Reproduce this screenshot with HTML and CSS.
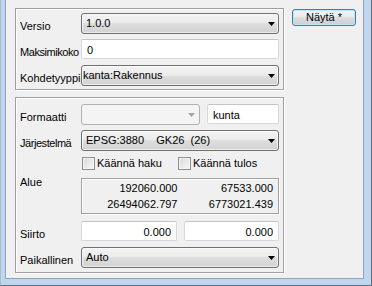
FILE: index.html
```html
<!DOCTYPE html>
<html lang="fi">
<head>
  <meta charset="UTF-8" />
  <title>Asetukset</title>
  <link rel="stylesheet" href="styles.css">
</head>
<body>
  <div class="window">
    <div class="client">
      <div class="panels">
        <div class="group group-top">
          <div class="row">
            <span class="label">Versio</span>
            <div class="combo">
              <span class="combo-text">1.0.0</span>
              <svg class="arrow" width="7" height="4" viewBox="0 0 7 4"><polygon points="0,0 7,0 3.5,4" /></svg>
            </div>
          </div>
          <div class="row row-tight">
            <span class="label label-narrow">Maksimikoko</span>
            <input class="textbox" type="text" value="0" />
          </div>
          <div class="row">
            <span class="label">Kohdetyyppi</span>
            <div class="combo combo-edit">
              <span class="combo-text">kanta:Rakennus</span>
              <svg class="arrow" width="7" height="4" viewBox="0 0 7 4"><polygon points="0,0 7,0 3.5,4" /></svg>
            </div>
          </div>
        </div>

        <div class="group group-bottom">
          <div class="row">
            <span class="label">Formaatti</span>
            <div class="field-pair">
              <div class="combo combo-disabled">
                <svg class="arrow" width="7" height="4" viewBox="0 0 7 4"><polygon points="0,0 7,0 3.5,4" /></svg>
              </div>
              <input class="textbox" type="text" value="kunta" />
            </div>
          </div>
          <div class="row row-tight">
            <span class="label label-narrow">Järjestelmä</span>
            <div class="combo">
              <span class="combo-text">EPSG:3880    GK26  (26)</span>
              <svg class="arrow" width="7" height="4" viewBox="0 0 7 4"><polygon points="0,0 7,0 3.5,4" /></svg>
            </div>
          </div>
          <div class="row row-checks">
            <span class="label"></span>
            <div class="checks">
              <label class="check"><span class="box"></span>Käännä haku</label>
              <label class="check"><span class="box"></span>Käännä tulos</label>
            </div>
          </div>
          <div class="row row-alue">
            <span class="label label-top">Alue</span>
            <div class="extent">
              <span>192060.000</span>
              <span>67533.000</span>
              <span>26494062.797</span>
              <span>6773021.439</span>
            </div>
          </div>
          <div class="row row-siirto">
            <span class="label">Siirto</span>
            <div class="field-pair">
              <input class="textbox num first" type="text" value="0.000" />
              <input class="textbox num" type="text" value="0.000" />
            </div>
          </div>
          <div class="row">
            <span class="label">Paikallinen</span>
            <div class="combo">
              <span class="combo-text">Auto</span>
              <svg class="arrow" width="7" height="4" viewBox="0 0 7 4"><polygon points="0,0 7,0 3.5,4" /></svg>
            </div>
          </div>
        </div>
      </div>

      <button class="btn-default">Näytä *</button>
    </div>
  </div>
</body>
</html>
```

FILE: styles.css
```css
html, body {
  margin: 0;
  padding: 0;
}
body {
  font-family: "Liberation Sans", Arial, sans-serif;
  font-size: 11px;
  color: #000;
  background: #bfd5ec;
}
.window {
  box-sizing: border-box;
  width: 372px;
  height: 286px;
  background: #c0d6ee;
  border-left: 1px solid #a9bacd;
  border-right: 1px solid #5f6f82;
  border-bottom: 1px solid #5f6f82;
  padding: 0 7px 6px 4px;
}
.client {
  box-sizing: border-box;
  height: 100%;
  background: #f0f0f0;
  border: 1px solid #8ea4be;
  border-top: none;
  padding: 8px 0 0 9px;
  display: flex;
  align-items: flex-start;
}

/* group boxes, etched border */
.group {
  box-sizing: border-box;
  width: 269px;
  border: 1px solid #a0a0a0;
  box-shadow: inset 1px 1px 0 #fff, 1px 1px 0 #fff;
}
.group-top {
  height: 82px;
  padding: 4px 4px 3px 4px;
}
.group-bottom {
  height: 176px;
  margin-top: 7px;
  padding: 6px 4px 4px 4px;
}

.row {
  display: flex;
  align-items: flex-start;
  margin-top: 6px;
}
.row:first-child { margin-top: 0; }
.row-tight { margin-top: 5px; }
.row-alue { margin-top: 8px; }
.row-siirto { margin-top: 7px; }

.label {
  flex: none;
  width: 61px;
  padding-top: 7px;
  line-height: 13px;
  white-space: nowrap;
}
.label-narrow { letter-spacing: -0.45px; }
.label-top {
  padding-top: 0;
  margin-top: -2px;
}

/* dropdowns */
.combo {
  flex: 1;
  min-width: 0;
  box-sizing: border-box;
  height: 21px;
  display: flex;
  align-items: center;
  padding-left: 4px;
  border: 1px solid #707070;
  border-radius: 3px;
  background: linear-gradient(#f3f3f3, #ebebeb 50%, #dedede 50%, #d2d2d2);
  box-shadow: inset 0 0 0 1px rgba(255, 255, 255, 0.6);
}
.combo-edit { padding-left: 1px; }
.combo-text {
  white-space: pre;
  line-height: 13px;
}
.arrow {
  margin-left: auto;
  margin-right: 3px;
  fill: #000;
}
.combo-disabled {
  flex: none;
  width: 119px;
  border-color: #adb2b5;
  background: #f4f4f4;
  box-shadow: none;
}
.combo-disabled .arrow {
  margin-right: 4px;
  fill: #a3a3a3;
}

/* text boxes */
.textbox {
  flex: 1;
  width: 0;
  min-width: 0;
  box-sizing: border-box;
  height: 20px;
  margin: 0;
  padding: 1px 5px 0 5px;
  border: 1px solid #d5d8dd;
  border-top-color: #c2c5cb;
  border-radius: 2px;
  background: #fff;
  font: 11px "Liberation Sans", Arial, sans-serif;
  color: #000;
  outline: none;
}
.textbox.num { text-align: right; }
.textbox.first {
  flex: none;
  width: 96px;
}

.field-pair {
  flex: 1;
  min-width: 0;
  display: flex;
  gap: 7px;
}

/* checkboxes */
.row-checks .label { padding-top: 0; }
.checks {
  flex: 1;
  display: flex;
  height: 13px;
}
.check {
  width: 95px;
  padding-left: 1px;
  display: flex;
  align-items: center;
  gap: 2px;
  line-height: 13px;
  white-space: nowrap;
}
.box {
  box-sizing: border-box;
  width: 13px;
  height: 13px;
  border: 1px solid #8f8f8f;
  background: linear-gradient(135deg, #d9d9d9, #f7f7f7);
  box-shadow: inset 0 0 0 1px #f4f4f4;
}

/* area box */
.extent {
  flex: 1;
  box-sizing: border-box;
  height: 36px;
  padding: 3px 5px 0 0;
  display: grid;
  grid-template-columns: 1fr 1fr;
  line-height: 13px;
  text-align: right;
  border: 1px solid #a0a0a0;
  box-shadow: inset 1px 1px 0 #fff, 1px 1px 0 #fff;
}

/* default button */
.btn-default {
  box-sizing: border-box;
  width: 64px;
  height: 17px;
  margin: 1px 0 0 8px;
  padding: 0;
  border: 1px solid #3c7fb1;
  border-radius: 3px;
  background: linear-gradient(#f2f2f2, #ebebeb 50%, #dddddd 50%, #cfcfcf);
  box-shadow: inset 0 0 0 1px #bfe6f9;
  font: 11px "Liberation Sans", Arial, sans-serif;
  line-height: 13px;
  color: #000;
}
```
